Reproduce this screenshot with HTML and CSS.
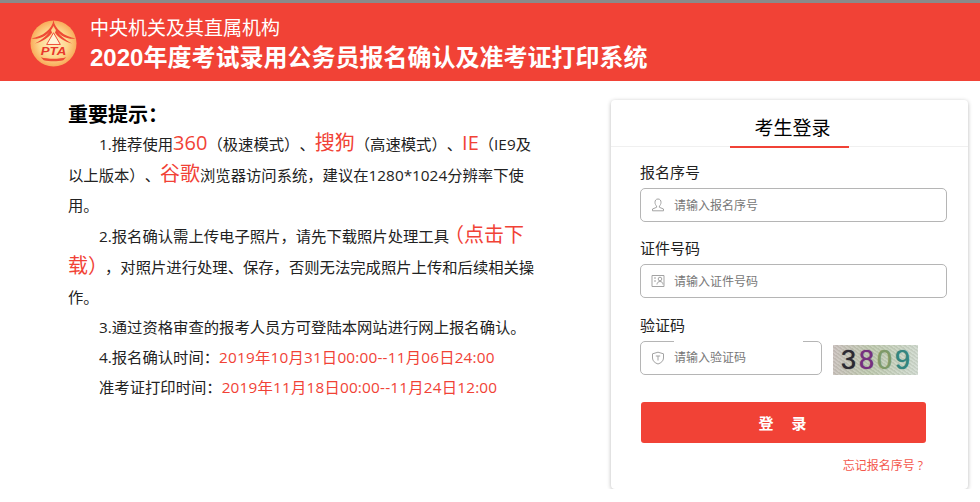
FILE: index.html
```html
<!DOCTYPE html>
<html lang="zh-CN">
  <head>
    <meta charset="UTF-8" />
    <title>2020年度考试录用公务员报名确认及准考证打印系统</title>
    <link rel="stylesheet" href="styles.css">
  </head>
  <body>
    <div class="header">
      <svg class="logo" viewBox="0 0 48 48" width="47" height="47">
        <defs>
          <radialGradient id="logoBg" cx="50%" cy="50%" r="50%">
            <stop offset="0%" stop-color="#fff0c4" />
            <stop offset="60%" stop-color="#fdd88f" />
            <stop offset="100%" stop-color="#f9ab5a" />
          </radialGradient>
        </defs>
        <circle cx="24" cy="24" r="23.5" fill="url(#logoBg)" />
        <path d="M24 0 C23 9 13 17 1 19 C11 20 20 15 24 6 C28 15 37 20 47 19 C35 17 25 9 24 0Z" fill="#ef4b35" />
        <path d="M21 9 C19 15 13 20 5 24 C13 22 19 18 22.500 13Z M27 9 C29 15 35 20 43 24 C35 22 29 18 25.500 13Z" fill="#ef4b35" />
        <path d="M24 13 L17 25 H31Z" fill="#fff4d6" stroke="#ef4b35" stroke-width="1" />
        <text class="logo-text" x="24" y="36" text-anchor="middle" textLength="26" lengthAdjust="spacingAndGlyphs">PTA</text>
        <path d="M11 38 C18 40 30 40 37 38 L34 41 C28 42.500 20 42.500 14 41Z" fill="#ef4b35" />
      </svg>
      <div class="header-text">
        <div class="org">中央机关及其直属机构</div>
        <div class="system">2020年度考试录用公务员报名确认及准考证打印系统</div>
      </div>
    </div>

    <div class="main">
      <div class="notice">
        <h2 class="notice-title">重要提示：</h2>
        <p>1.推荐使用<span class="big">360</span>（极速模式）、<span class="big">搜狗</span>（高速模式）、<span class="big">IE</span>（IE9及以上版本）、<span class="big">谷歌</span>浏览器访问系统，建议在1280*1024分辨率下使用。</p>
        <p>2.报名确认需上传电子照片，请先下载照片处理工具<span class="big link">（点击下载）</span>，对照片进行处理、保存，否则无法完成照片上传和后续相关操作。</p>
        <p>3.通过资格审查的报考人员方可登陆本网站进行网上报名确认。</p>
        <p>4.报名确认时间：<span class="red">2019年10月31日00:00--11月06日24:00</span></p>
        <p>准考证打印时间：<span class="red">2019年11月18日00:00--11月24日12:00</span></p>
      </div>

      <div class="card">
        <div class="card-head"><span class="card-title">考生登录</span></div>
        <div class="form">
          <div class="field">
            <label class="label">报名序号</label>
            <div class="box">
              <svg class="icon" viewBox="0 0 14 14" width="14" height="14">
                <path d="M7 1 C4.800 1 4 2.600 4 4.300 C4 6 4.800 7.300 5.600 8 L5.600 9.300 L1.500 11 V12.800 H12.500 V11 L8.400 9.300 V8 C9.200 7.300 10 6 10 4.300 C10 2.600 9.200 1 7 1Z" />
              </svg>
              <input class="input" type="text" placeholder="请输入报名序号">
            </div>
          </div>
          <div class="field">
            <label class="label">证件号码</label>
            <div class="box">
              <svg class="icon" viewBox="0 0 14 14" width="14" height="14">
                <path d="M1 1.500 H13 V12.500 H1Z" />
                <circle cx="9" cy="5" r="1.800" />
                <path d="M6 10.500 C6 8.500 7.500 7.500 9 7.500 C10.500 7.500 12 8.500 12 10.500 M3 4 H5 M3 7 H5" />
              </svg>
              <input class="input" type="text" placeholder="请输入证件号码">
            </div>
          </div>
          <div class="field field-code">
            <label class="label">验证码</label>
            <div class="code-row">
              <div class="box box-code">
                <svg class="icon" viewBox="0 0 14 14" width="14" height="14">
                  <path d="M7 1.200 L12.500 2.800 V7 C12.500 10 10 12 7 13 C4 12 1.500 10 1.500 7 V2.800Z" />
                  <path d="M4.800 5 H9.200 M7 5 V9.500" />
                </svg>
                <input class="input input-code" type="text" placeholder="请输入验证码">
              </div>
              <div class="captcha"><span class="d1">3</span><span class="d2">8</span><span class="d3">0</span><span class="d4">9</span></div>
            </div>
          </div>
          <button class="btn" type="button">登录</button>
          <div class="forgot"><a href="#">忘记报名序号 ?</a></div>
        </div>
      </div>
    </div>
  </body>
</html>
```

FILE: styles.css
```css
body {
  margin: 0;
  background: #fff;
  color: #000;
  font-family: "Open Sans", "Noto Sans CJK SC", sans-serif;
  text-spacing-trim: space-all;
  overflow: hidden;
}

.header {
  display: flex;
  align-items: center;
  height: 78px;
  border-top: 3px solid #8a8a8a;
  background: #f14236;
  padding-left: 30px;
  color: #fff;
}

.logo {
  display: block;
  margin-top: 2px;
  margin-right: 13px;
}

.logo-text {
  font-family: "Liberation Sans", sans-serif;
  font-size: 12px;
  font-weight: bold;
  font-style: italic;
  fill: #e8382c;
}

.header-text {
  margin-top: 4px;
}

.org {
  font-size: 19px;
  line-height: 27px;
}

.system {
  font-family: "Liberation Sans", "Noto Sans CJK SC", sans-serif;
  font-size: 24px;
  font-weight: bold;
  line-height: 32px;
}

.main {
  display: flex;
  align-items: flex-start;
  padding: 19px 12px 0 68px;
}

.notice {
  width: 470px;
  font-size: 15.33px;
  line-height: 30px;
  color: #222;
}

.notice-title {
  margin: 0;
  font-family: "Noto Sans CJK TC", sans-serif;
  font-size: 20px;
  line-height: 28px;
  color: #000;
}

.notice p {
  margin: 0;
  text-indent: 31px;
}

.big {
  font-size: 20px;
  color: #f14236;
}

.link {
  margin-left: -5px;
  margin-right: -3px;
}

.red {
  letter-spacing: 0.2px;
  color: #f14236;
}

.card {
  width: 357px;
  height: 389px;
  margin-left: 73px;
  border-radius: 4px;
  box-shadow: 0 1px 4px rgba(0, 0, 0, 0.28);
}

.card-head {
  height: 46px;
  border-bottom: 1px solid #f0f0f0;
  text-align: center;
}

.card-title {
  display: inline-block;
  box-sizing: border-box;
  width: 119px;
  height: 48px;
  padding-left: 6px;
  line-height: 56px;
  font-size: 19px;
  border-bottom: 2px solid #f14236;
}

.form {
  padding: 14px 21px 0 29px;
}

.field {
  margin-bottom: 15px;
}

.field-code {
  margin-top: 16px;
  margin-bottom: 27px;
}

.label {
  display: block;
  height: 22px;
  margin-bottom: 5px;
  font-size: 15px;
  line-height: 22px;
  color: #222;
}

.box {
  display: flex;
  align-items: center;
  box-sizing: border-box;
  height: 34px;
  padding-left: 10px;
  border: 1px solid #b5b5b5;
  border-radius: 5px;
}

.code-row {
  display: flex;
  align-items: flex-end;
}

.box-code {
  width: 182px;
}

.icon {
  flex: none;
  fill: none;
  stroke: #a3a3a3;
  stroke-width: 1;
}

.input {
  flex: 1;
  min-width: 0;
  margin-left: 9px;
  padding: 0;
  border: 0;
  outline: 0;
  background: transparent;
  font-family: inherit;
  font-size: 12px;
  height: 26px;
}

.input::placeholder {
  color: #777;
}

.input-code {
  flex: none;
  align-self: flex-start;
  width: 129px;
  height: 33px;
  margin-top: -1px;
  background: #fff;
}

.captcha {
  display: flex;
  justify-content: center;
  gap: 3px;
  width: 85px;
  height: 30px;
  margin-left: 11px;
  background:
    repeating-linear-gradient(35deg, rgba(255, 255, 255, 0.14) 0 1px, rgba(120, 120, 110, 0.1) 2px 3px),
    linear-gradient(100deg, #c9bfbc, #bcc8ac 45%, #d0dad0);
  font-family: "Liberation Sans", sans-serif;
  font-size: 27px;
  line-height: 30px;
}

.captcha span {
  text-shadow: 0 0 1px currentColor;
}

.d1 { color: #2c2a33; }
.d2 { color: #76307f; }
.d3 { color: #7f9a68; }
.d4 { color: #33857f; }

.btn {
  display: block;
  width: 285px;
  height: 41px;
  margin-left: 1px;
  padding: 0 0 0 16px;
  border: 0;
  border-radius: 3px;
  background: #f14236;
  color: #fff;
  font-family: inherit;
  font-size: 15px;
  font-weight: bold;
  letter-spacing: 18px;
}

.forgot {
  margin-top: 15px;
  width: 283px;
  text-align: right;
  font-size: 12px;
  line-height: 16px;
}

.forgot a {
  color: #f4574c;
  text-decoration: none;
}
```
